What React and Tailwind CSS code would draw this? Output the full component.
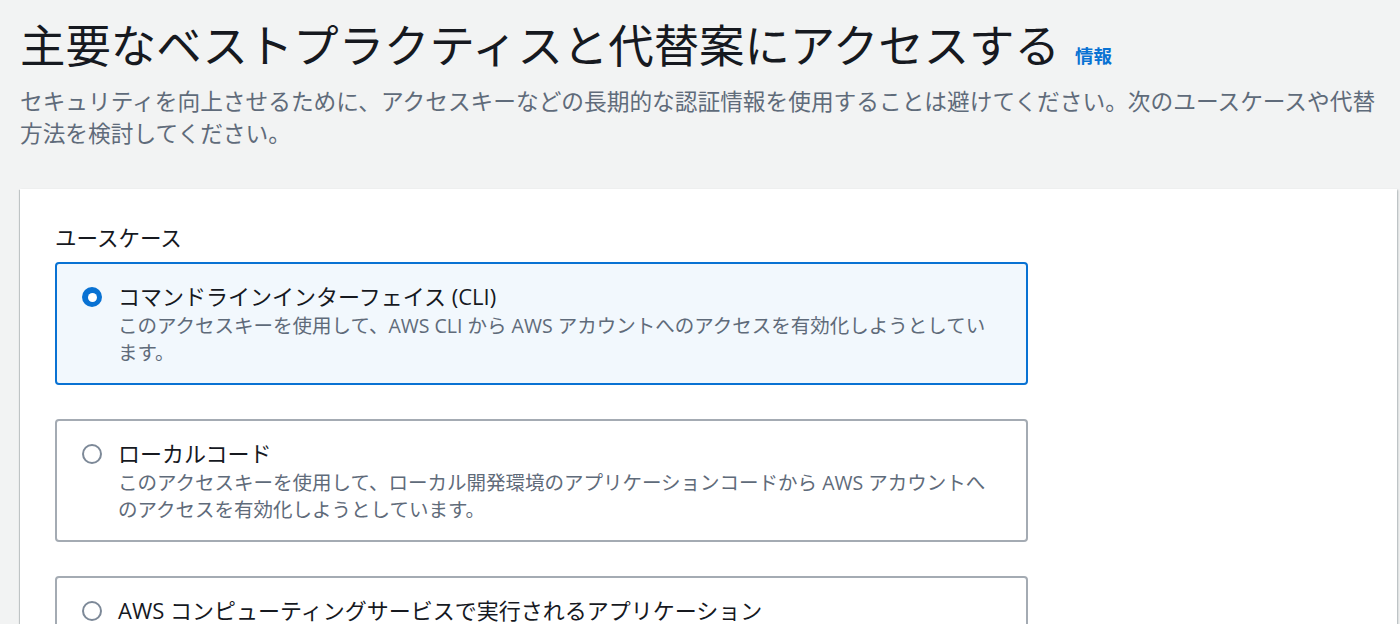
import React from "react";

const FONT = { fontFamily: '"Open Sans", "Noto Sans CJK JP", sans-serif' };

function Radio({ checked }) {
  if (checked) {
    return (
      <span className="mt-[7px] flex h-[20px] w-[20px] shrink-0 items-center justify-center rounded-full bg-[#0972d3]">
        <span className="h-[9px] w-[9px] rounded-full bg-white" />
      </span>
    );
  }
  return (
    <span className="mt-[7px] block h-[20px] w-[20px] shrink-0 rounded-full border-[2px] border-[#7d8998] bg-white" />
  );
}

function Option({ checked, title, desc }) {
  return (
    <div
      className={
        "flex gap-[16px] rounded-[4px] border-[2px] pl-[25px] pr-[24px] pt-[16px] pb-[17px] " +
        (checked ? "border-[#0972d3] bg-[#f2f8fd]" : "border-[#a4abb3] bg-white")
      }
    >
      <Radio checked={checked} />
      <div className="min-w-0 flex-1">
        <div className="text-[22px] leading-[32px] text-[#16191f]">{title}</div>
        <div className="text-[19.5px] leading-[27px] text-[#5f6b7a]">{desc}</div>
      </div>
    </div>
  );
}

export default function App() {
  return (
    <div className="min-h-[624px] bg-[#f2f3f3] pb-[40px]" style={FONT}>
      <div className="px-[20px] pt-[17px]">
        <h1 className="flex items-baseline text-[45.4px] leading-[56px] text-[#16191f]">
          <span>主要なベストプラクティスと代替案にアクセスする</span>
          <span className="ml-[15px] text-[18.5px] font-bold text-[#0972d3]">情報</span>
        </h1>
        <p className="mt-[2px] text-[22.7px] leading-[32px] text-[#5f6b7a]">
          セキュリティを向上させるために、アクセスキーなどの長期的な認証情報を使用することは避けてください。次のユースケースや代替方法を検討してください。
        </p>
      </div>
      <div className="ml-[20px] mr-[3px] mt-[39px] bg-white px-[35px] pt-[34px] pb-[40px] shadow-[0_1px_1px_0_rgba(0,28,36,0.3),1px_1px_2px_0_rgba(0,28,36,0.25),-1px_1px_1px_0_rgba(0,28,36,0.15)]">
        <div className="text-[21.5px] leading-[30px] text-[#16191f]">ユースケース</div>
        <div className="mt-[9px] flex w-[973px] flex-col gap-[34px]">
          <Option
            checked
            title="コマンドラインインターフェイス (CLI)"
            desc="このアクセスキーを使用して、AWS CLI から AWS アカウントへのアクセスを有効化しようとしています。"
          />
          <Option
            title="ローカルコード"
            desc="このアクセスキーを使用して、ローカル開発環境のアプリケーションコードから AWS アカウントへのアクセスを有効化しようとしています。"
          />
          <Option
            title="AWS コンピューティングサービスで実行されるアプリケーション"
            desc="このアクセスキーを使用して、Amazon EC2、Amazon ECS、AWS Lambda などの AWS コンピューティングサービスで実行されるアプリケーションコードから AWS アカウントへのアクセスを有効化しようとしています。"
          />
        </div>
      </div>
    </div>
  );
}
